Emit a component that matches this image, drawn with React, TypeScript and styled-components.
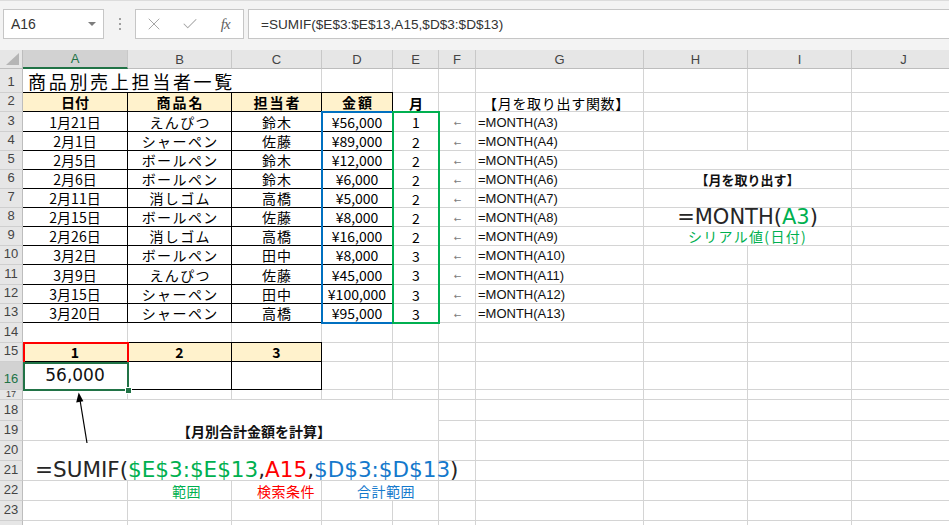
import React from 'react';
import styled, { createGlobalStyle, css } from 'styled-components';
import { X, Check } from 'lucide-react';

const JP = `"Noto Sans CJK JP", "Noto Sans", sans-serif`;
const UI = `"Liberation Sans", Arial, sans-serif`;
const WIDE = `"DejaVu Sans", "Noto Sans CJK JP", sans-serif`;

const GREEN = '#00b050';
const RED = '#ff0000';
const BLUE = '#0070c0';
const BLUE_TEXT = '#1479cc';
const BEIGE = '#fff2cc';
const GRID = '#d4d4d4';
const EXCEL = '#217346';

const COLS = 'ABCDEFGHIJ'.split('');
const COL_WIDTHS = [105, 104, 90, 71, 46, 37, 168, 104, 104, 104];
const ROW_HEIGHTS = [
  24, 19, 20, 19, 19, 19, 19, 19, 19, 19, 20, 19, 19, 20, 19, 28, 10, 21, 20, 20, 20, 20, 20, 20,
];

const DATA = [
  { date: '1月21日', item: 'えんぴつ', person: '鈴木', amount: '¥56,000', month: 1 },
  { date: '2月1日', item: 'シャーペン', person: '佐藤', amount: '¥89,000', month: 2 },
  { date: '2月5日', item: 'ボールペン', person: '鈴木', amount: '¥12,000', month: 2 },
  { date: '2月6日', item: 'ボールペン', person: '鈴木', amount: '¥6,000', month: 2 },
  { date: '2月11日', item: '消しゴム', person: '高橋', amount: '¥5,000', month: 2 },
  { date: '2月15日', item: 'ボールペン', person: '佐藤', amount: '¥8,000', month: 2 },
  { date: '2月26日', item: '消しゴム', person: '高橋', amount: '¥16,000', month: 2 },
  { date: '3月2日', item: 'ボールペン', person: '田中', amount: '¥8,000', month: 3 },
  { date: '3月9日', item: 'えんぴつ', person: '佐藤', amount: '¥45,000', month: 3 },
  { date: '3月15日', item: 'シャーペン', person: '田中', amount: '¥100,000', month: 3 },
  { date: '3月20日', item: 'シャーペン', person: '高橋', amount: '¥95,000', month: 3 },
];

const GlobalStyle = createGlobalStyle`
  *, *::before, *::after { box-sizing: border-box; }
  html, body { margin: 0; padding: 0; background: #fff; }
  body { font-family: ${JP}; overflow: hidden; }
`;

interface Place {
  $c: number;
  $r: number;
  $cs?: number;
  $rs?: number;
}

const place = css<Place>`
  grid-column: ${(p) => p.$c + 1} / span ${(p) => p.$cs ?? 1};
  grid-row: ${(p) => p.$r + 1} / span ${(p) => p.$rs ?? 1};
`;

const Window = styled.div`
  width: 949px;
  height: 525px;
  overflow: hidden;
  background: #fff;
  display: flex;
  flex-direction: column;
`;

/* ---------- formula bar ---------- */

const FormulaBar = styled.div`
  flex: none;
  height: 50px;
  background: #f3f3f3;
  border-top: 1px solid #dcdcdc;
  display: flex;
  align-items: flex-start;
  padding: 8px 0 0 3px;
`;

const NameBox = styled.div`
  width: 101px;
  height: 30px;
  background: #fff;
  border: 1px solid #c6c6c6;
  display: flex;
  align-items: center;
  justify-content: space-between;
  padding: 0 7px 0 7px;
  font-family: ${UI};
  font-size: 14px;
  color: #333;
`;

const Caret = styled.span`
  width: 0;
  height: 0;
  border-left: 4px solid transparent;
  border-right: 4px solid transparent;
  border-top: 4px solid #7d7d7d;
`;

const Grip = styled.div`
  width: 31px;
  height: 30px;
  display: flex;
  align-items: center;
  justify-content: center;
`;

const FxGroup = styled.div`
  width: 109px;
  height: 30px;
  background: #fff;
  border: 1px solid #c6c6c6;
  display: flex;
`;

const FxSlot = styled.div`
  flex: 1;
  display: flex;
  align-items: center;
  justify-content: center;
`;

const FxMark = styled.span`
  font-family: "Liberation Serif", serif;
  font-style: italic;
  font-size: 15px;
  color: #5f5f5f;
  letter-spacing: -1px;
`;

const FormulaInput = styled.div`
  flex: 1;
  height: 30px;
  margin-left: 4px;
  background: #fff;
  border: 1px solid #c6c6c6;
  border-right: none;
  display: flex;
  align-items: center;
  padding-left: 12px;
  font-family: ${UI};
  font-size: 13.6px;
  color: #333;
`;

/* ---------- sheet ---------- */

const Sheet = styled.div`
  position: relative;
  flex: none;
  display: grid;
  grid-template-columns: 23px ${COL_WIDTHS.map((w) => `${w}px`).join(' ')};
  grid-template-rows: 19px ${ROW_HEIGHTS.map((h) => `${h}px`).join(' ')};
`;

const Corner = styled.div`
  grid-column: 1;
  grid-row: 1;
  background: #e6e6e6;
  border-right: 1px solid #bdbdbd;
  border-bottom: 1px solid #bdbdbd;
  display: flex;
  align-items: flex-end;
  justify-content: flex-end;
  padding: 0 3px 3px 0;
`;

const ColHeader = styled.div<Place & { $selected?: boolean }>`
  ${place};
  background: ${(p) => (p.$selected ? '#d2d2d2' : '#e6e6e6')};
  border-right: 1px solid #c8c8c8;
  border-bottom: ${(p) => (p.$selected ? `2px solid ${EXCEL}` : '1px solid #bdbdbd')};
  display: flex;
  align-items: center;
  justify-content: center;
  font-family: ${UI};
  font-size: 13px;
  color: ${(p) => (p.$selected ? EXCEL : '#444')};
`;

const RowHeader = styled.div<Place & { $selected?: boolean; $tiny?: boolean }>`
  ${place};
  background: ${(p) => (p.$selected ? '#d2d2d2' : '#e6e6e6')};
  border-right: 1px solid #bdbdbd;
  border-bottom: 1px solid #cfcfcf;
  display: flex;
  justify-content: center;
  align-items: ${(p) => (p.$tiny ? 'flex-start' : 'flex-end')};
  padding: ${(p) => (p.$tiny ? '0' : '0 0 4px')};
  overflow: hidden;
  font-family: ${UI};
  font-size: ${(p) => (p.$tiny ? '9px' : '13px')};
  line-height: 1;
  color: ${(p) => (p.$selected ? EXCEL : '#444')};
`;

const GridCell = styled.div<Place>`
  ${place};
  background: #fff;
  border-right: 1px solid ${GRID};
  border-bottom: 1px solid ${GRID};
`;

const CellText = styled.div<Place & { $justify?: string; $align?: string }>`
  ${place};
  display: flex;
  justify-content: ${(p) => p.$justify ?? 'flex-start'};
  align-items: ${(p) => p.$align ?? 'center'};
  white-space: nowrap;
  line-height: 1;
  color: #000;
`;

const MergedCell = styled(CellText)`
  background: #fff;
  border-right: 1px solid ${GRID};
  border-bottom: 1px solid ${GRID};
`;

const TableCell = styled.div<Place & { $fill?: string; $bold?: boolean; $spacing?: number }>`
  ${place};
  margin: -1px 0 0 -1px;
  border: 1px solid #000;
  background: ${(p) => p.$fill ?? '#fff'};
  display: flex;
  align-items: center;
  justify-content: center;
  padding-left: ${(p) => p.$spacing ?? 0}px;
  font-family: ${JP};
  font-size: 14px;
  font-weight: ${(p) => (p.$bold ? 700 : 400)};
  letter-spacing: ${(p) => p.$spacing ?? 0}px;
  line-height: 1;
  color: #000;
  white-space: nowrap;
`;

const Outline = styled.div<Place & { $color: string; $m?: string }>`
  ${place};
  margin: ${(p) => p.$m ?? '-1px'};
  border: 2px solid ${(p) => p.$color};
  pointer-events: none;
`;

const Selection = styled.div<Place>`
  ${place};
  position: relative;
  margin: 0 -1px -1px 0;
  border: 2px solid ${EXCEL};
  pointer-events: none;
  &::after {
    content: '';
    position: absolute;
    right: -5px;
    bottom: -5px;
    width: 7px;
    height: 7px;
    background: ${EXCEL};
    border: 1px solid #fff;
  }
`;

const ArrowLayer = styled.svg`
  position: absolute;
  left: 0;
  top: 0;
  overflow: visible;
  pointer-events: none;
`;

/* ---------- typography ---------- */

const SheetTitle = styled.span`
  margin-left: 5px;
  font-family: ${JP};
  font-size: 18px;
  letter-spacing: 2.7px;
`;

const Num = styled.span<{ $bold?: boolean }>`
  font-family: ${JP};
  font-size: 14px;
  font-weight: ${(p) => (p.$bold ? 700 : 400)};
`;

const LeftArrow = styled.span`
  font-family: "DejaVu Sans", sans-serif;
  font-size: 9px;
  color: #7a7a7a;
  padding-top: 3px;
`;

const MonthRef = styled.span`
  margin-left: 2px;
  font-family: ${UI};
  font-size: 13px;
  color: #111;
`;

const SectionLabel = styled.span`
  margin-left: 7px;
  font-family: ${JP};
  font-size: 14px;
  letter-spacing: 0.7px;
`;

const Heading = styled.span<{ $size: number; $ml?: number; $mb?: number }>`
  margin-left: ${(p) => p.$ml ?? 0}px;
  margin-bottom: ${(p) => p.$mb ?? 0}px;
  font-family: ${JP};
  font-size: ${(p) => p.$size}px;
  font-weight: 700;
  color: #111;
`;

const BigFormula = styled.span<{ $ml?: number; $size?: number }>`
  margin-left: ${(p) => p.$ml ?? 0}px;
  font-family: ${WIDE};
  font-size: ${(p) => p.$size ?? 21}px;
  line-height: 21px;
  color: #262626;
`;

const BigValue = styled.span`
  font-family: ${WIDE};
  font-size: 17px;
  color: #111;
`;

const Tone = styled.span<{ $color: string }>`
  color: ${(p) => p.$color};
`;

const Hint = styled.span<{ $color: string; $ml?: number; $spacing?: number }>`
  margin-left: ${(p) => p.$ml ?? 0}px;
  font-family: ${JP};
  font-size: 14px;
  letter-spacing: ${(p) => p.$spacing ?? 0.5}px;
  color: ${(p) => p.$color};
`;

function App() {
  return (
    <>
      <GlobalStyle />
      <Window>
        <FormulaBar>
          <NameBox>
            A16
            <Caret />
          </NameBox>
          <Grip>
            <svg width="2" height="12" viewBox="0 0 2 12">
              <rect x="0" y="0" width="2" height="2" fill="#a0a0a0" />
              <rect x="0" y="5" width="2" height="2" fill="#a0a0a0" />
              <rect x="0" y="10" width="2" height="2" fill="#a0a0a0" />
            </svg>
          </Grip>
          <FxGroup>
            <FxSlot>
              <X size={20} strokeWidth={1.2} color="#a6a6a6" />
            </FxSlot>
            <FxSlot>
              <Check size={18} strokeWidth={1.4} color="#a6a6a6" />
            </FxSlot>
            <FxSlot>
              <FxMark>fx</FxMark>
            </FxSlot>
          </FxGroup>
          <FormulaInput>=SUMIF($E$3:$E$13,A15,$D$3:$D$13)</FormulaInput>
        </FormulaBar>

        <Sheet>
          {ROW_HEIGHTS.map((_, ri) =>
            COLS.map((_, ci) => <GridCell key={`g${ri}-${ci}`} $r={ri + 1} $c={ci + 1} />),
          )}

          <MergedCell $r={1} $c={1} $cs={3}>
            <SheetTitle>商品別売上担当者一覧</SheetTitle>
          </MergedCell>

          <TableCell $r={2} $c={1} $fill={BEIGE} $bold>日付</TableCell>
          <TableCell $r={2} $c={2} $fill={BEIGE} $bold $spacing={2}>商品名</TableCell>
          <TableCell $r={2} $c={3} $fill={BEIGE} $bold $spacing={2}>担当者</TableCell>
          <TableCell $r={2} $c={4} $fill={BEIGE} $bold $spacing={2}>金額</TableCell>
          <CellText $r={2} $c={5} $justify="center">
            <Num $bold>月</Num>
          </CellText>
          <CellText $r={2} $c={7}>
            <SectionLabel>【月を取り出す関数】</SectionLabel>
          </CellText>

          {DATA.map((d, i) => {
            const r = i + 3;
            return (
              <React.Fragment key={r}>
                <TableCell $r={r} $c={1}>{d.date}</TableCell>
                <TableCell $r={r} $c={2} $spacing={1.4}>{d.item}</TableCell>
                <TableCell $r={r} $c={3} $spacing={1}>{d.person}</TableCell>
                <TableCell $r={r} $c={4}>{d.amount}</TableCell>
                <CellText $r={r} $c={5} $justify="center">
                  <Num>{d.month}</Num>
                </CellText>
                <CellText $r={r} $c={6} $justify="center">
                  <LeftArrow>←</LeftArrow>
                </CellText>
                <CellText $r={r} $c={7}>
                  <MonthRef>=MONTH(A{r})</MonthRef>
                </CellText>
              </React.Fragment>
            );
          })}

          {[5, 6, 7, 8, 9].map((r) => (
            <MergedCell key={`h${r}`} $r={r} $c={8} $cs={2} $justify="center">
              {r === 6 && <Heading $size={13}>【月を取り出す】</Heading>}
              {r === 8 && (
                <BigFormula>
                  =MONTH(<Tone $color={GREEN}>A3</Tone>)
                </BigFormula>
              )}
              {r === 9 && (
                <Hint $color={GREEN} $spacing={1.3}>
                  シリアル値(日付)
                </Hint>
              )}
            </MergedCell>
          ))}

          <TableCell $r={15} $c={1} $fill={BEIGE} $bold>1</TableCell>
          <TableCell $r={15} $c={2} $fill={BEIGE} $bold>2</TableCell>
          <TableCell $r={15} $c={3} $fill={BEIGE} $bold>3</TableCell>
          <TableCell $r={16} $c={1}>
            <BigValue>56,000</BigValue>
          </TableCell>
          <TableCell $r={16} $c={2} />
          <TableCell $r={16} $c={3} />

          <MergedCell $r={18} $c={1} $cs={5} $rs={2} $align="flex-end">
            <Heading $size={14} $ml={154} $mb={2}>
              【月別合計金額を計算】
            </Heading>
          </MergedCell>
          <MergedCell $r={20} $c={1} $cs={5} $rs={2} $align="flex-end">
            <BigFormula $ml={12} $size={21.5}>
              =SUMIF(<Tone $color={GREEN}>$E$3:$E$13</Tone>,<Tone $color={RED}>A15</Tone>,
              <Tone $color={BLUE_TEXT}>$D$3:$D$13</Tone>)
            </BigFormula>
          </MergedCell>

          <MergedCell $r={22} $c={2}>
            <Hint $color={GREEN} $ml={44}>範囲</Hint>
          </MergedCell>
          <MergedCell $r={22} $c={3}>
            <Hint $color={RED} $ml={25}>検索条件</Hint>
          </MergedCell>
          <MergedCell $r={22} $c={4} $cs={2}>
            <Hint $color={BLUE_TEXT} $ml={35}>合計範囲</Hint>
          </MergedCell>

          <Corner>
            <svg width="13" height="12" viewBox="0 0 13 12">
              <polygon points="13,0 13,12 0,12" fill="#b5b5b5" />
            </svg>
          </Corner>
          {COLS.map((name, ci) => (
            <ColHeader key={name} $r={0} $c={ci + 1} $selected={name === 'A'}>
              {name}
            </ColHeader>
          ))}
          {ROW_HEIGHTS.map((h, ri) => (
            <RowHeader key={`r${ri}`} $r={ri + 1} $c={0} $selected={ri + 1 === 16} $tiny={h < 14}>
              {ri + 1}
            </RowHeader>
          ))}

          <Outline $r={3} $c={4} $rs={11} $color={BLUE} />
          <Outline $r={3} $c={5} $rs={11} $color={GREEN} />
          <Outline $r={15} $c={1} $color={RED} $m="-1px -1px -2px 0" />
          <Selection $r={16} $c={1} />

          <ArrowLayer width="949" height="475">
            <line x1="87" y1="393" x2="80" y2="350" stroke="#000" strokeWidth="1.2" />
            <polygon points="78.7,342.5 83.4,351.2 76.2,352.4" fill="#000" />
          </ArrowLayer>
        </Sheet>
      </Window>
    </>
  );
}

export default App;
